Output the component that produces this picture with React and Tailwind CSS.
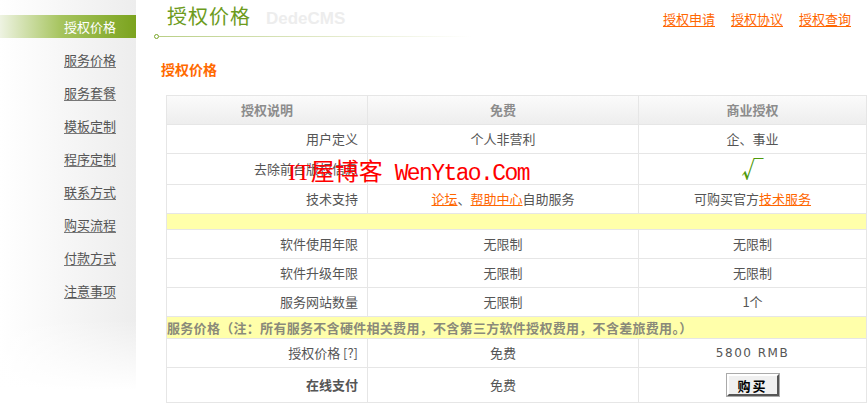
import React from "react";

const font = { fontFamily: '"Noto Sans CJK SC", "Liberation Sans", sans-serif' };

const menu = ["授权价格", "服务价格", "服务套餐", "模板定制", "程序定制", "联系方式", "购买流程", "付款方式", "注意事项"];

function Sidebar() {
  return (
    <div className="w-[136px] shrink-0 h-[410px] pt-[15px] bg-[linear-gradient(to_bottom,rgba(255,255,255,0)_78%,#fff_95%),linear-gradient(to_right,#fff,#ededed)]">
      {menu.map((m, i) =>
        i === 0 ? (
          <div
            key={m}
            className="h-[23px] flex items-center justify-end pr-[20px] text-[13px] text-white bg-[linear-gradient(to_right,#eef3e2,#a6c45e_45%,#7ba31e)]"
          >
            {m}
          </div>
        ) : (
          <div key={m} className="h-[33px] flex items-center justify-end pr-[20px] pt-[10px]">
            <a className="text-[13px] text-[#555] underline underline-offset-2 decoration-[#777]">{m}</a>
          </div>
        )
      )}
    </div>
  );
}

const cell = "border border-[#e6e6e6] text-[13px] text-[#555] px-[9px]";

export default function App() {
  return (
    <div className="flex w-[868px] h-[410px] bg-white overflow-hidden" style={font}>
      <Sidebar />
      <div className="flex-1 pl-[18px] relative">
        {/* top header */}
        <div className="flex items-end h-[36px]">
          <div className="flex items-baseline ml-[13px] pb-[5px]">
            <span className="text-[20px] leading-[24px] text-[#6c9b1c] tracking-[1px]">授权价格</span>
            <span className="ml-[15px] text-[17px] font-bold text-[#ededed]" style={{ fontFamily: '"Liberation Sans", sans-serif' }}>
              DedeCMS
            </span>
          </div>
          <div className="ml-auto flex gap-[16px] pr-[17px] pb-[8px] text-[13px]">
            <a className="text-[#ff6600] underline underline-offset-2">授权申请</a>
            <a className="text-[#ff6600] underline underline-offset-2">授权协议</a>
            <a className="text-[#ff6600] underline underline-offset-2">授权查询</a>
          </div>
        </div>
        <div className="flex items-center h-[3px] -mt-[1px]">
          <div className="w-[5px] h-[5px] rounded-full border border-[#7aa62a] bg-white shrink-0" />
          <div className="h-px w-[312px] bg-[linear-gradient(to_right,#b9cf86,#e6eccf_60%,#fff)]" />
        </div>

        <div className="ml-[7px] mt-[22px] text-[14px] font-bold text-[#ff6a00] leading-[18px]">授权价格</div>

        <table className="ml-[12px] mt-[17px] w-[700px] border-collapse table-fixed">
          <colgroup>
            <col className="w-[201px]" />
            <col className="w-[271px]" />
            <col className="w-[228px]" />
          </colgroup>
          <tbody>
            <tr className="h-[29px] bg-[linear-gradient(to_bottom,#fbfbfb,#ededed)]">
              <td className={cell + " text-center font-bold !text-[#8c8c8c]"}>授权说明</td>
              <td className={cell + " text-center font-bold !text-[#8c8c8c]"}>免费</td>
              <td className={cell + " text-center font-bold !text-[#8c8c8c]"}>商业授权</td>
            </tr>
            <tr className="h-[29px]">
              <td className={cell + " text-right"}>用户定义</td>
              <td className={cell + " text-center"}>个人非营利</td>
              <td className={cell + " text-center"}>企、事业</td>
            </tr>
            <tr className="h-[31px]">
              <td className={cell + " text-right"}>去除前台版权信息</td>
              <td className={cell + " text-center"}></td>
              <td className={cell + " text-center"}>
                <span className="text-[22px] font-bold text-[#4f9a0a] leading-none">√</span>
              </td>
            </tr>
            <tr className="h-[29px]">
              <td className={cell + " text-right"}>技术支持</td>
              <td className={cell + " text-center"}>
                <a className="text-[#ff6600] underline">论坛</a>、<a className="text-[#ff6600] underline">帮助中心</a>自助服务
              </td>
              <td className={cell + " text-center"}>
                可购买官方<a className="text-[#ff6600] underline">技术服务</a>
              </td>
            </tr>
            <tr className="h-[16px] bg-[#ffffaa]">
              <td colSpan={3} className="border border-[#e6e6e6]"></td>
            </tr>
            <tr className="h-[29px]">
              <td className={cell + " text-right"}>软件使用年限</td>
              <td className={cell + " text-center"}>无限制</td>
              <td className={cell + " text-center"}>无限制</td>
            </tr>
            <tr className="h-[29px]">
              <td className={cell + " text-right"}>软件升级年限</td>
              <td className={cell + " text-center"}>无限制</td>
              <td className={cell + " text-center"}>无限制</td>
            </tr>
            <tr className="h-[29px]">
              <td className={cell + " text-right"}>服务网站数量</td>
              <td className={cell + " text-center"}>无限制</td>
              <td className={cell + " text-center"}>1个</td>
            </tr>
            <tr className="h-[22px] bg-[#ffffaa]">
              <td colSpan={3} className="border border-[#e6e6e6] text-[13px] tracking-[0.3px] font-bold text-[#8a8a7a] px-0 whitespace-nowrap">
                服务价格（注：所有服务不含硬件相关费用，不含第三方软件授权费用，不含差旅费用。）
              </td>
            </tr>
            <tr className="h-[29px]">
              <td className={cell + " text-right"}>授权价格 [?]</td>
              <td className={cell + " text-center"}>免费</td>
              <td className={cell + " text-center tracking-[1.5px] !text-[12px]"} style={{ fontFamily: '"DejaVu Sans", sans-serif' }}>
                5800 RMB
              </td>
            </tr>
            <tr className="h-[35px]">
              <td className={cell + " text-right font-bold"}>在线支付</td>
              <td className={cell + " text-center"}>免费</td>
              <td className={cell + " text-center"}>
                <button className="w-[52px] h-[22px] bg-[#f0f0f0] border-2 border-t-[#fff] border-l-[#fff] border-r-[#555] border-b-[#555] outline outline-1 outline-[#aaa] text-[13px] font-bold text-black tracking-[2px]">
                  购买
                </button>
              </td>
            </tr>
          </tbody>
        </table>

        {/* watermark overlay */}
        <div
          className="absolute left-[152px] top-[158px] flex items-baseline text-[#ff0000] whitespace-nowrap pointer-events-none"
        >
          <span className="text-[24px] leading-[28px]" style={{ fontFamily: '"Liberation Serif", "Noto Sans CJK SC", serif' }}>
            IT屋博客
          </span>
          <span className="ml-[12px] text-[23px] leading-[28px] tracking-[-1.6px]" style={{ fontFamily: '"Liberation Mono", monospace' }}>
            WenYtao.Com
          </span>
        </div>
      </div>
    </div>
  );
}
